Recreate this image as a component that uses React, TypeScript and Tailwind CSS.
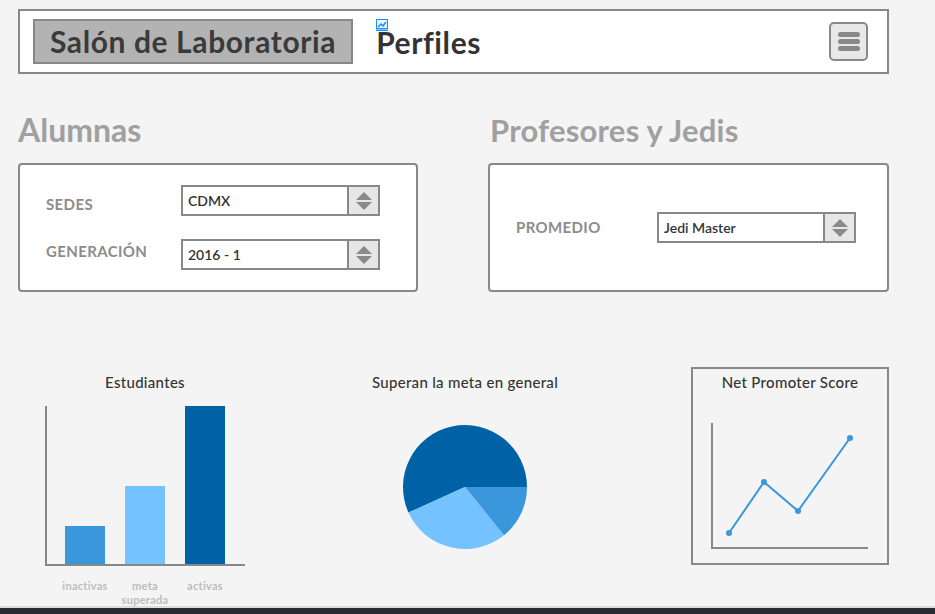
import React from "react";

const font = { fontFamily: "Lato, 'Open Sans', sans-serif" };

function Select({ value }: { value: string }) {
    return (
        <div className="flex h-[31px] w-[199px] border-2 border-[#888] bg-white">
            <div className="flex flex-1 items-center pl-[5px] text-[14px] font-semibold text-[#333]">{value}</div>
            <div className="flex w-[31px] flex-col items-center justify-center gap-[2px] border-l-2 border-[#888] bg-[#e6e6e6]">
                <svg width="16" height="8" viewBox="0 0 16 8">
                    <polygon points="8,0 16,8 0,8" fill="#8a8a8a" />
                </svg>
                <svg width="16" height="8" viewBox="0 0 16 8">
                    <polygon points="0,0 16,0 8,8" fill="#8a8a8a" />
                </svg>
            </div>
        </div>
    );
}

function Label({ children }: { children: React.ReactNode }) {
    return <div className="w-[135px] text-[15px] font-bold tracking-wide text-[#8c8c8c]">{children}</div>;
}

function BarChart() {
    const bars = [
        { h: 38, color: "bg-[#3a97dc]", label: "inactivas" },
        { h: 78, color: "bg-[#74c2ff]", label: "meta superada" },
        { h: 158, color: "bg-[#0062a6]", label: "activas" },
    ];
    return (
        <div className="w-[200px]">
            <div className="mt-[5px] h-[20px] text-center text-[15px] font-medium leading-[20px] tracking-[0.3px] text-[#333]">Estudiantes</div>
            <div className="mt-[14px] flex h-[160px] items-end gap-[20px] border-b-2 border-l-2 border-[#888] pl-[18px]">
                {bars.map((b) => (
                    <div key={b.label} className={`w-[40px] ${b.color}`} style={{ height: b.h }} />
                ))}
            </div>
            <div className="mt-[13px] flex gap-[20px] pl-[20px]">
                {bars.map((b) => (
                    <div key={b.label} className="flex w-[40px] justify-center text-center text-[11px] font-bold leading-[14px] tracking-wide text-[#bdbdbd]">
                        <span className="w-[60px] shrink-0">{b.label}</span>
                    </div>
                ))}
            </div>
        </div>
    );
}

function PieChart() {
    return (
        <div className="flex w-[200px] flex-col items-center">
            <div className="mt-[5px] h-[20px] whitespace-nowrap text-[15px] font-medium leading-[20px] tracking-[0.3px] text-[#333]">Superan la meta en general</div>
            <svg className="mt-[32px]" width="126" height="126" viewBox="-63 -63 126 126">
                <path d="M0 0 L62 0 A62 62 0 1 0 -56.5 25.6 Z" fill="#0062a6" />
                <path d="M0 0 L-56.5 25.6 A62 62 0 0 0 39 48.2 Z" fill="#74c2ff" />
                <path d="M0 0 L39 48.2 A62 62 0 0 0 62 0 Z" fill="#3a97dc" />
            </svg>
        </div>
    );
}

function LineChart() {
    const pts = [
        [36, 129],
        [71, 78],
        [105, 107],
        [157, 34],
    ];
    return (
        <div className="h-[198px] w-[198px] border-2 border-[#888]">
            <div className="mt-[3px] text-center text-[15px] font-medium leading-[20px] tracking-[0.3px] text-[#333]">Net Promoter Score</div>
            <svg width="194" height="155" viewBox="0 0 194 155" className="mt-[12px]">
                <polyline points="19,19 19,144 175,144" fill="none" stroke="#888" strokeWidth="2" />
                <polyline points={pts.map((p) => p.join(",")).join(" ")} fill="none" stroke="#3a97dc" strokeWidth="2" />
                {pts.map(([x, y]) => (
                    <circle key={x} cx={x} cy={y} r="3" fill="#3a97dc" />
                ))}
            </svg>
        </div>
    );
}

export default function App() {
    return (
        <div className="flex h-[614px] w-[935px] flex-col overflow-hidden bg-[#f4f4f4]" style={font}>
            <div className="min-h-0 flex-1 pl-[18px] pt-[9px]">
                {/* Header */}
                <div className="flex h-[65px] w-[871px] items-center border-2 border-[#888] bg-white pl-[13px] pr-[19px]">
                    <div className="flex h-[45px] items-center border-2 border-[#888] bg-[#b3b3b3] px-[15px] text-[30px] font-bold tracking-[0.6px] text-[#3a3a3a]">
                        Salón de Laboratoria
                    </div>
                    <div className="ml-[23px] flex flex-col">
                        <svg width="12" height="12" viewBox="0 0 12 12" className="-mt-[6px]">
                            <rect x="0.5" y="0.5" width="11" height="9" fill="#e8f4ff" stroke="#1a8cff" />
                            <path d="M2 8 L5 5 L7 7 L10 3" fill="none" stroke="#1a8cff" strokeWidth="1.5" />
                            <rect x="0" y="10.5" width="12" height="1.5" fill="#1a8cff" />
                        </svg>
                        <div className="-mt-[6px] text-[30px] font-bold leading-[34px] tracking-[0.6px] text-[#333]">Perfiles</div>
                    </div>
                    <div className="ml-auto flex h-[39px] w-[39px] flex-col items-center justify-center gap-[2px] rounded-[5px] border-2 border-[#888] bg-[#e8e8e8]">
                        <div className="h-[5px] w-[22px] rounded-full bg-[#888]" />
                        <div className="h-[5px] w-[22px] rounded-full bg-[#888]" />
                        <div className="h-[5px] w-[22px] rounded-full bg-[#888]" />
                    </div>
                </div>

                {/* Filters */}
                <div className="mt-[37px] flex w-[871px] gap-[70px]">
                    <div className="w-[400px]">
                        <h2 className="h-[38px] text-[32px] font-bold leading-[38px] text-[#a0a0a0]">Alumnas</h2>
                        <div className="mt-[14px] h-[129px] rounded-[4px] border-2 border-[#888] bg-white pl-[26px] pt-[20px]">
                            <div className="flex items-center">
                                <div className="mt-[8px]"><Label>SEDES</Label></div>
                                <Select value="CDMX" />
                            </div>
                            <div className="mt-[23px] flex items-center">
                                <div className="-mt-[6px]"><Label>GENERACIÓN</Label></div>
                                <Select value="2016 - 1" />
                            </div>
                        </div>
                    </div>
                    <div className="w-[401px]">
                        <h2 className="ml-[2px] h-[38px] text-[31px] font-bold leading-[38px] tracking-[0.2px] text-[#a0a0a0]">Profesores y Jedis</h2>
                        <div className="mt-[14px] flex h-[129px] items-center rounded-[4px] border-2 border-[#888] bg-white pl-[26px]">
                            <Label>PROMEDIO</Label>
                            <div className="ml-[6px]"><Select value="Jedi Master" /></div>
                        </div>
                    </div>
                </div>

                {/* Charts */}
                <div className="mt-[75px] flex">
                    <div className="ml-[27px]">
                        <BarChart />
                    </div>
                    <div className="ml-[120px]">
                        <PieChart />
                    </div>
                    <div className="ml-[126px]">
                        <LineChart />
                    </div>
                </div>
            </div>
            <div className="h-[8px] shrink-0 border-t-2 border-[#dcdcdc] bg-[#292c31]" />
        </div>
    );
}
